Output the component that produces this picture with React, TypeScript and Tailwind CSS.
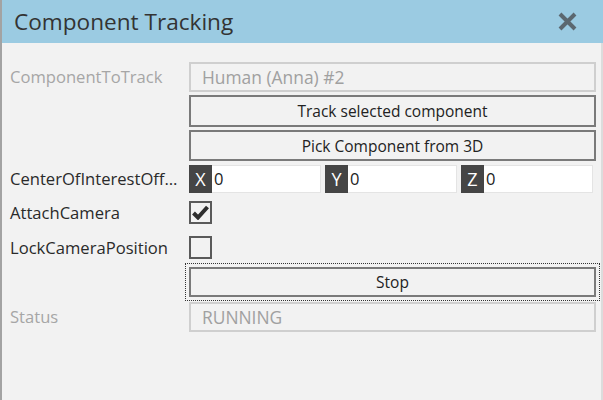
import React from 'react';

const font = { fontFamily: '"Open Sans", "Noto Sans", sans-serif' };

function Label({ text, disabled }: { text: string; disabled?: boolean }) {
    return (
        <div
            className={`w-[187px] shrink-0 truncate pl-[8px] pr-[6px] pt-[1px] text-[16.6px] ${disabled ? 'text-[#a6a6a6]' : 'text-[#2a2a2a]'}`}
        >
            {text}
        </div>
    );
}

function Button({ text, className = '' }: { text: string; className?: string }) {
    return (
        <div
            className={`flex items-center justify-center border-2 border-[#7a7a7a] bg-[#f2f2f2] pt-[2px] text-[15.5px] text-[#222] ${className}`}
        >
            {text}
        </div>
    );
}

function ReadOnlyBox({ text, className = '' }: { text: string; className?: string }) {
    return (
        <div
            className={`flex items-center border-2 border-[#cfcfcf] bg-[#f2f2f2] pl-[11px] pt-[1px] text-[17.4px] text-[#a0a0a0] ${className}`}
        >
            {text}
        </div>
    );
}

function AxisField({ axis, width }: { axis: string; width: string }) {
    return (
        <div className={`flex h-full ${width}`}>
            <div className="flex w-[23px] items-center justify-center bg-[#454545] text-[18px] text-white">
                {axis}
            </div>
            <div className="flex flex-1 items-center border border-l-0 border-[#e4e4e4] bg-white pl-[2px] text-[16.5px] text-[#222]">
                0
            </div>
        </div>
    );
}

function Checkbox({ checked }: { checked?: boolean }) {
    return (
        <div className="flex h-[23px] w-[23px] items-center justify-center border-2 border-[#5a5a5a] bg-[#f2f2f2]">
            {checked && (
                <svg width="17" height="15" viewBox="0 0 17 15">
                    <path d="M1.5 8 L6 12.5 L15.5 2" fill="none" stroke="#2e2e2e" strokeWidth="4" />
                </svg>
            )}
        </div>
    );
}

export default function App() {
    return (
        <div style={font} className="flex h-[400px] w-[603px] flex-col border-l-2 border-[#a3a3a3] bg-[#f2f2f2]">
            {/* Title bar */}
            <div className="flex h-[43px] shrink-0 items-center justify-between bg-[#9bcbe2] pl-[12px] pr-[26px]">
                <span className="text-[22.6px] text-[#333]">Component Tracking</span>
                <svg width="19" height="19" viewBox="0 0 19 19">
                    <path d="M2 2 L17 17 M17 2 L2 17" stroke="#5b6870" strokeWidth="4" />
                </svg>
            </div>

            {/* Body */}
            <div className="flex flex-1 flex-col border-r-2 border-[#dcdcdc] pr-[5px]">
                <div className="mt-[19px] flex h-[30px] items-center">
                    <Label text="ComponentToTrack" disabled />
                    <ReadOnlyBox text="Human (Anna) #2" className="h-full flex-1" />
                </div>
                <div className="mt-[3px] flex h-[32px] items-center">
                    <div className="w-[187px] shrink-0" />
                    <Button text="Track selected component" className="h-full flex-1" />
                </div>
                <div className="mt-[3px] flex h-[31px] items-center">
                    <div className="w-[187px] shrink-0" />
                    <Button text="Pick Component from 3D" className="h-full flex-1" />
                </div>
                <div className="mt-[4px] flex h-[28px] items-center">
                    <Label text="CenterOfInterestOffset" />
                    <div className="flex h-full flex-1 gap-[4px] pr-[2px]">
                        <AxisField axis="X" width="w-[132px]" />
                        <AxisField axis="Y" width="w-[132px]" />
                        <AxisField axis="Z" width="w-[132px]" />
                    </div>
                </div>
                <div className="mt-[6px] flex h-[27px] items-center">
                    <Label text="AttachCamera" />
                    <Checkbox checked />
                </div>
                <div className="mt-[8px] flex h-[27px] items-center">
                    <Label text="LockCameraPosition" />
                    <Checkbox />
                </div>
                <div className="mt-[2px] flex h-[38px] items-center">
                    <div className="w-[183px] shrink-0" />
                    <div className="-mr-[4px] h-full flex-1 border border-dotted border-[#333] p-[3px]">
                        <Button text="Stop" className="h-full" />
                    </div>
                </div>
                <div className="mt-[1px] flex h-[30px] items-center">
                    <Label text="Status" disabled />
                    <ReadOnlyBox text="RUNNING" className="h-full flex-1" />
                </div>
            </div>
        </div>
    );
}
